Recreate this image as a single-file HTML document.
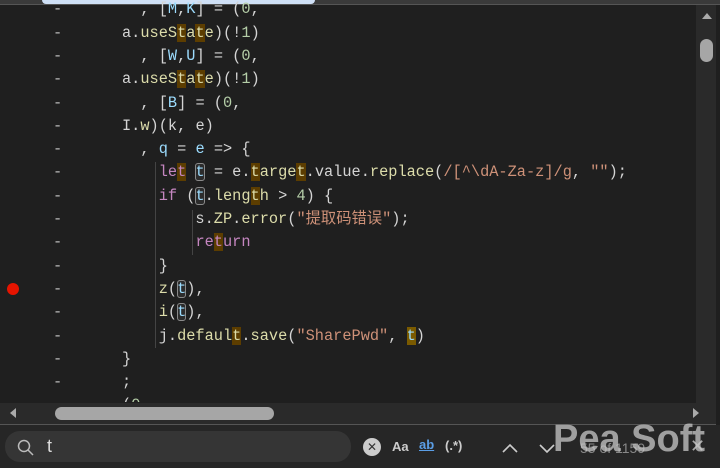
<!DOCTYPE html><html><head><meta charset="utf-8"><style>
body{margin:0;width:720px;height:468px;background:#1f1f1f;overflow:hidden;position:relative;font-family:"Liberation Mono","Noto Sans CJK SC",monospace}
.top{position:absolute;left:0;top:0;width:720px;height:4px;background:#3a3a3a;border-bottom:1px solid #555}
.blue{position:absolute;left:42px;top:0;width:273px;height:4px;background:#cfe0f6;border-radius:0 0 4px 4px}
.code{position:absolute;left:0;top:-1.6px;width:696px;height:404px;overflow:hidden;font-size:15.3px;line-height:23.3px;color:#d4d4d4}
.r{height:23.3px;position:relative}
.d{position:absolute;left:53px;color:#bbb}
.c{position:absolute;left:122px;white-space:pre}
.y{color:#dcdcaa}.b{color:#9cdcfe}.k{color:#c586c0}.s{color:#ce9178}.n{color:#b5cea8}
.h{background:#5c3d00}.H{background:#7a5a00}
.bx{outline:1px solid #8a8a8a;outline-offset:-1px;border-radius:3px;background:#2c2c2c}
.g{position:absolute;width:1px;background:#444}
.vs{position:absolute;left:696px;top:5px;width:20px;height:398px;background:#2a2a2a}
.hs{position:absolute;left:0;top:403px;width:716px;height:21px;background:#2a2a2a;border-bottom:1px solid #555}
.bot{position:absolute;left:0;top:425px;width:720px;height:43px;background:#262626}
.sb{position:absolute;left:5px;top:431px;width:346px;height:31px;border-radius:15px;background:#353535}
</style></head><body>
<div class="top"></div><div class="blue"></div>
<div class="g" style="left:155px;top:162px;height:186px"></div>
<div class="g" style="left:192px;top:210px;height:45px"></div>
<div class="code"><div class="r"><span class="d">-</span><span class="c">  , [<span class="b">M</span>,<span class="b">K</span>] = (<span class="n">0</span>,</span></div><div class="r"><span class="d">-</span><span class="c">a.<span class="y">useS<span class="h">t</span>a<span class="h">t</span>e</span>)(!<span class="n">1</span>)</span></div><div class="r"><span class="d">-</span><span class="c">  , [<span class="b">W</span>,<span class="b">U</span>] = (<span class="n">0</span>,</span></div><div class="r"><span class="d">-</span><span class="c">a.<span class="y">useS<span class="h">t</span>a<span class="h">t</span>e</span>)(!<span class="n">1</span>)</span></div><div class="r"><span class="d">-</span><span class="c">  , [<span class="b">B</span>] = (<span class="n">0</span>,</span></div><div class="r"><span class="d">-</span><span class="c">I.<span class="y">w</span>)(k, e)</span></div><div class="r"><span class="d">-</span><span class="c">  , <span class="b">q</span> = <span class="b">e</span> =&gt; {</span></div><div class="r"><span class="d">-</span><span class="c">    <span class="k">le<span class="h">t</span></span> <span class="bx b">t</span> = e.<span class="y"><span class="h">t</span>arge<span class="h">t</span></span>.value.<span class="y">replace</span>(<span class="s">/[^\dA-Za-z]/g</span>, <span class="s">""</span>);</span></div><div class="r"><span class="d">-</span><span class="c">    <span class="k">if</span> (<span class="bx b">t</span>.<span class="y">leng<span class="h">t</span>h</span> &gt; <span class="n">4</span>) {</span></div><div class="r"><span class="d">-</span><span class="c">        s.<span class="y">ZP</span>.<span class="y">error</span>(<span class="s">"提取码错误"</span>);</span></div><div class="r"><span class="d">-</span><span class="c">        <span class="k">re<span class="h">t</span>urn</span></span></div><div class="r"><span class="d">-</span><span class="c">    }</span></div><div class="r"><span class="d">-</span><span class="c">    <span class="y">z</span>(<span class="bx b">t</span>),</span></div><div class="r"><span class="d">-</span><span class="c">    <span class="y">i</span>(<span class="bx b">t</span>),</span></div><div class="r"><span class="d">-</span><span class="c">    j.<span class="y">defaul<span class="h">t</span></span>.<span class="y">save</span>(<span class="s">"SharePwd"</span>, <span class="H b">t</span>)</span></div><div class="r"><span class="d">-</span><span class="c">}</span></div><div class="r"><span class="d">-</span><span class="c">;</span></div><div class="r"><span class="c">(<span class="n">0</span>,</span></div></div>
<div style="position:absolute;left:7px;top:283px;width:12px;height:12px;border-radius:50%;background:#e51400"></div>
<div class="vs"></div>
<div style="position:absolute;left:702px;top:13px;width:0;height:0;border-left:5px solid transparent;border-right:5px solid transparent;border-bottom:6px solid #aaa"></div>
<div style="position:absolute;left:700px;top:39px;width:13px;height:23px;border-radius:7px;background:#a6a6a6"></div>
<div class="hs"></div>
<div style="position:absolute;left:10px;top:408px;border-top:5px solid transparent;border-bottom:5px solid transparent;border-right:6px solid #aaa"></div>
<div style="position:absolute;left:693px;top:408px;border-top:5px solid transparent;border-bottom:5px solid transparent;border-left:6px solid #aaa"></div>
<div style="position:absolute;left:55px;top:407px;width:219px;height:13px;border-radius:7px;background:#a6a6a6"></div>
<div class="bot"></div>
<div class="sb"></div>
<svg style="position:absolute;left:16px;top:438px" width="20" height="20"><circle cx="8" cy="8" r="5.5" fill="none" stroke="#bbb" stroke-width="1.5"/><line x1="12" y1="12" x2="17" y2="17" stroke="#bbb" stroke-width="1.5"/></svg>
<div style="position:absolute;left:47px;top:436px;font:18px 'Liberation Sans',sans-serif;color:#ddd">t</div>
<div style="position:absolute;left:363px;top:438px;width:18px;height:18px;border-radius:50%;background:#ccc;color:#333;font:12px 'Liberation Sans',sans-serif;text-align:center;line-height:18px">✕</div>
<div style="position:absolute;left:392px;top:439px;font:bold 13px 'Liberation Sans',sans-serif;color:#ccc">Aa</div>
<div style="position:absolute;left:419px;top:437px;font:bold 13px 'Liberation Sans',sans-serif;color:#5b9ee6;text-decoration:underline">ab</div>
<div style="position:absolute;left:445px;top:438px;font:bold 13px 'Liberation Sans',sans-serif;color:#ccc">(.*)</div>
<svg style="position:absolute;left:500px;top:438px" width="60" height="20"><path d="M3 14 L10 7 L17 14" fill="none" stroke="#ccc" stroke-width="1.6"/><path d="M40 7 L47 14 L54 7" fill="none" stroke="#ccc" stroke-width="1.6"/></svg>
<div style="position:absolute;left:580px;top:440px;font:14px 'Liberation Sans',sans-serif;color:#888">55 of 1159</div>
<div style="position:absolute;left:690px;top:436px;font:18px 'Liberation Sans',sans-serif;color:#aaa">✕</div>
<div style="position:absolute;left:553px;top:418px;font:bold 38px 'Liberation Sans',sans-serif;color:rgba(200,200,200,0.75)">Pea Soft</div>
</body></html>
